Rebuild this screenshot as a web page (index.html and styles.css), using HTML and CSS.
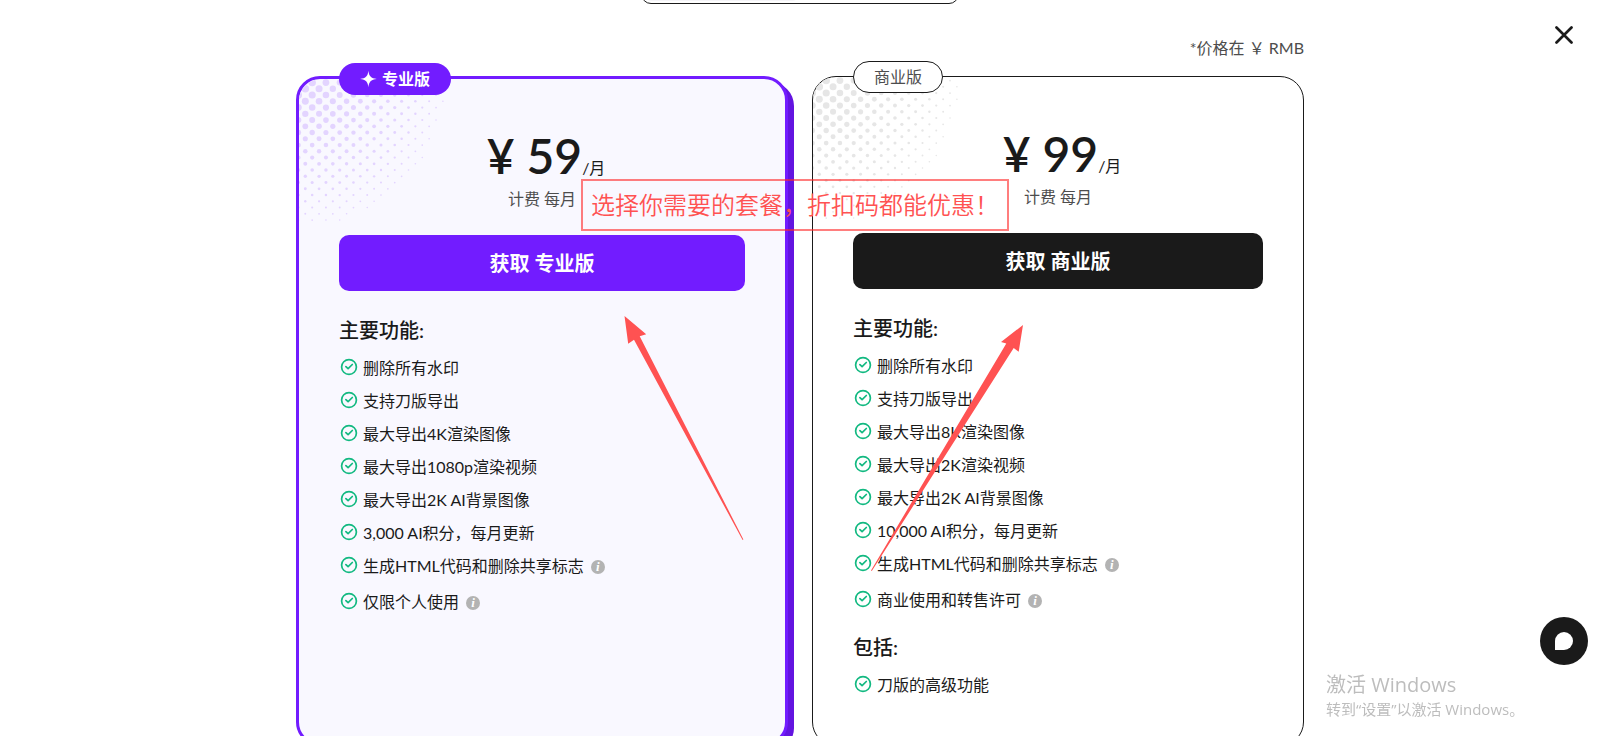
FILE: index.html
```html
<!DOCTYPE html>
<html lang="zh-CN">
<head>
<meta charset="utf-8">
<title>套餐</title>
<link rel="stylesheet" href="styles.css">
</head>
<body>
<svg class="sprite" aria-hidden="true">
  <symbol id="check" viewBox="0 0 16 16" overflow="visible">
    <circle cx="8" cy="8" r="7.4" fill="none" stroke="#12b981" stroke-width="1.7"/>
    <path d="M4.9 7.6 7.1 9.7 11.3 5.5" fill="none" stroke="#12b981" stroke-width="1.7" stroke-linecap="round" stroke-linejoin="round"/>
  </symbol>
</svg>

<main class="pricing">
  <div class="toggle"><span class="toggle-on"></span></div>
  <p class="currency">*价格在 ￥ RMB</p>

  <div class="plans">
    <section class="plan plan-pro">
      <svg class="dots" aria-hidden="true"></svg>
      <div class="badge">
        <svg class="star" viewBox="0 0 20 20" aria-hidden="true"><path d="M10.4 1.8C11 7.2 12.8 9.3 18.8 10 12.8 10.7 11 12.8 10.4 18.2 9.8 12.8 8 10.7 2 10 8 9.3 9.8 7.2 10.4 1.8Z" fill="#fff"/></svg>
        专业版
      </div>
      <div class="price"><span class="amount">¥ 59</span><span class="per">/月</span></div>
      <p class="billing">计费 每月</p>
      <button class="buy" type="button">获取 专业版</button>
      <h2>主要功能:</h2>
      <ul class="features">
        <li><svg class="check"><use href="#check"/></svg>删除所有水印</li>
        <li><svg class="check"><use href="#check"/></svg>支持刀版导出</li>
        <li><svg class="check"><use href="#check"/></svg>最大导出4K渲染图像</li>
        <li><svg class="check"><use href="#check"/></svg>最大导出1080p渲染视频</li>
        <li><svg class="check"><use href="#check"/></svg>最大导出2K AI背景图像</li>
        <li><svg class="check"><use href="#check"/></svg>3,000 AI积分，每月更新</li>
        <li><svg class="check"><use href="#check"/></svg>生成HTML代码和删除共享标志<button class="info" type="button">i</button></li>
        <li><svg class="check"><use href="#check"/></svg>仅限个人使用<button class="info" type="button">i</button></li>
      </ul>
    </section>

    <section class="plan plan-business">
      <svg class="dots" aria-hidden="true"></svg>
      <div class="badge">商业版</div>
      <div class="price"><span class="amount">¥ 99</span><span class="per">/月</span></div>
      <p class="billing">计费 每月</p>
      <button class="buy" type="button">获取 商业版</button>
      <h2>主要功能:</h2>
      <ul class="features">
        <li><svg class="check"><use href="#check"/></svg>删除所有水印</li>
        <li><svg class="check"><use href="#check"/></svg>支持刀版导出</li>
        <li><svg class="check"><use href="#check"/></svg>最大导出8K渲染图像</li>
        <li><svg class="check"><use href="#check"/></svg>最大导出2K渲染视频</li>
        <li><svg class="check"><use href="#check"/></svg>最大导出2K AI背景图像</li>
        <li><svg class="check"><use href="#check"/></svg>10,000 AI积分，每月更新</li>
        <li><svg class="check"><use href="#check"/></svg>生成HTML代码和删除共享标志<button class="info" type="button">i</button></li>
        <li><svg class="check"><use href="#check"/></svg>商业使用和转售许可<button class="info" type="button">i</button></li>
      </ul>
      <h2 class="extra">包括:</h2>
      <ul class="features">
        <li><svg class="check"><use href="#check"/></svg>刀版的高级功能</li>
      </ul>
    </section>
  </div>

  <div class="notes">
    <svg class="arrows" viewBox="0 0 1008 736" aria-hidden="true">
      <g fill="#ff5252">
        <path d="M328.5 316 350.2 334.3 343.7 336.3 447.4 539.5 446.6 540 338 339.7 332.2 343.7Z"/>
        <path d="M727 325 722.7 351.7 717.7 348 575.8 571 575 570.5 710.3 343.5 705 342Z"/>
      </g>
    </svg>
    <p class="callout">选择你需要的套餐，折扣码都能优惠！</p>
  </div>
</main>

<button class="close" type="button" aria-label="关闭"><svg viewBox="0 0 18 18"><path d="M1.5 1.5 16.5 16.5M16.5 1.5 1.5 16.5" stroke="#1a1a1a" stroke-width="2.7" stroke-linecap="round"/></svg></button>
<button class="chat" type="button" aria-label="聊天"><svg viewBox="0 0 18 18"><path d="M0 18V9a9 9 0 1 1 9 9Z" fill="#fff"/></svg></button>
<div class="watermark">
  <p class="watermark-title">激活 Windows</p>
  <p class="watermark-text">转到“设置”以激活 Windows。</p>
</div>
<script src="dots.js"></script>
</body>
</html>
```
FILE: styles.css
```css
* {
  box-sizing: border-box;
}

body {
  margin: 0;
  height: 100vh;
  overflow: hidden;
  background: #fff;
  color: #1a1a1a;
  font: 16px/24px Lato, "Noto Sans CJK SC", sans-serif;
}

p, h2, ul {
  margin: 0;
  padding: 0;
}

button {
  padding: 0;
  border: 0;
  font: inherit;
  cursor: pointer;
}

.sprite {
  position: absolute;
  width: 0;
  height: 0;
}

.pricing {
  position: relative;
  display: flow-root;
  width: 100%;
  max-width: 1008px;
  margin: 0 auto;
}

/* billing toggle, scrolled almost out of view */
.toggle {
  display: flex;
  width: 318px;
  height: 48px;
  margin: -44px auto 32px;
  padding: 2px;
  border: 1px solid #1a1a1a;
  border-radius: 10px;
}

.toggle-on {
  flex: 0 0 50%;
  border-radius: 8px;
  background: #f5f4f8;
}

.currency {
  margin-bottom: 16px;
  color: #4d4d4d;
  text-align: right;
}

.plans {
  display: grid;
  grid-template-columns: 1fr 1fr;
  gap: 24px;
}

.plan {
  position: relative;
  display: flex;
  flex-direction: column;
  padding: 49px 40px 48px;
  border: 1px solid #1a1a1a;
  border-radius: 24px;
  background: #fff;
}

.plan-pro {
  border: 3px solid #721cff;
  background: #f9f8ff;
  box-shadow: 6px 6px 0 #6314e0;
}

.dots {
  position: absolute;
  top: 0;
  left: 0;
  width: 152px;
  height: 152px;
  border-top-left-radius: 22px;
  fill: #e6e6e6;
}

.plan-pro .dots {
  fill: #e3d4ff;
}

.badge {
  position: absolute;
  top: -16px;
  left: 40px;
  display: flex;
  align-items: center;
  gap: 4px;
  height: 32px;
  padding: 0 20px;
  border: 1px solid #1a1a1a;
  border-radius: 16px;
  background: #fff;
  color: #4d4d4d;
}

.plan-pro .badge {
  padding: 0 21px 0 19px;
  border: 0;
  background: #721cff;
  color: #fff;
  font-weight: 700;
}

.star {
  width: 20px;
  height: 20px;
}

.price {
  display: flex;
  justify-content: center;
  align-items: baseline;
  height: 56px;
  padding-left: 8px;
}

.amount {
  font-size: 48px;
  font-weight: 600;
  line-height: 56px;
}

.per {
  font-weight: 400;
}

.billing {
  margin: 3px 0 24px;
  color: #4d4d4d;
  text-align: center;
}

.buy {
  height: 56px;
  border-radius: 10px;
  background: #1a1a1a;
  color: #fff;
  font-size: 20px;
  font-weight: 700;
}

.plan-pro .buy {
  background: #721cff;
}

h2 {
  margin: 24px 0 11px;
  font-size: 20px;
  font-weight: 500;
  line-height: 30px;
}

h2.extra {
  margin-top: 17px;
}

.features {
  display: flex;
  flex-direction: column;
  gap: 9px;
  list-style: none;
}

.features li {
  display: flex;
  align-items: flex-start;
}

.check {
  width: 16px;
  height: 16px;
  margin: 3px 6px 0 2px;
  overflow: visible;
}

.info {
  width: 14px;
  height: 14px;
  margin: 6px 0 7px 7px;
  border-radius: 50%;
  background: #b3b3b3;
  color: #fff;
  font: italic bold 13px/14px "Liberation Serif", serif;
}

/* hand-drawn remarks over the plans */
.notes {
  position: absolute;
  top: 0;
  left: 0;
  width: 100%;
  pointer-events: none;
}

.arrows {
  display: block;
  width: 100%;
}

.callout {
  position: absolute;
  top: 179px;
  left: 285px;
  padding: 8px;
  border: 2px solid rgba(255, 40, 40, 0.6);
  color: #ff5252;
  font-size: 24px;
  font-weight: 350;
  line-height: 32px;
  white-space: nowrap;
}

.close {
  position: fixed;
  top: 26px;
  right: 27px;
  width: 18px;
  height: 18px;
  background: none;
}

.close svg {
  display: block;
}

.chat {
  position: fixed;
  right: 12px;
  bottom: 71px;
  display: grid;
  place-items: center;
  width: 48px;
  height: 48px;
  border-radius: 50%;
  background: #1a1a1a;
}

.chat svg {
  width: 18px;
  height: 18px;
}

.watermark {
  position: fixed;
  right: 74px;
  bottom: 15px;
  width: 200px;
  color: #bdbdbd;
  font-family: "Open Sans", "Noto Sans CJK SC", sans-serif;
  font-weight: 400;
  white-space: nowrap;
}

.watermark-title {
  font-size: 20px;
  line-height: 24px;
}

.watermark-text {
  font-size: 15px;
}
```
FILE: dots.js
```js
// Halftone corner: staggered dots that shrink away from the card's corner.
const NS = "http://www.w3.org/2000/svg";
const REACH = 147;

document.querySelectorAll(".dots").forEach((svg) => {
  for (let row = -3; row < 22; row++) {
    for (let col = -1; col < 22; col++) {
      if ((row + col) % 2 !== 0) continue;
      const x = 6.3 + col * 6.88;
      const y = 22.3 + row * 6.25;
      const distance = Math.hypot(x, y);
      if (distance > REACH) continue;
      const dot = document.createElementNS(NS, "circle");
      dot.setAttribute("cx", x.toFixed(2));
      dot.setAttribute("cy", y.toFixed(2));
      dot.setAttribute("r", (0.7 + 3.4 * Math.pow(1 - distance / 152, 1.2)).toFixed(2));
      svg.appendChild(dot);
    }
  }
});
```
